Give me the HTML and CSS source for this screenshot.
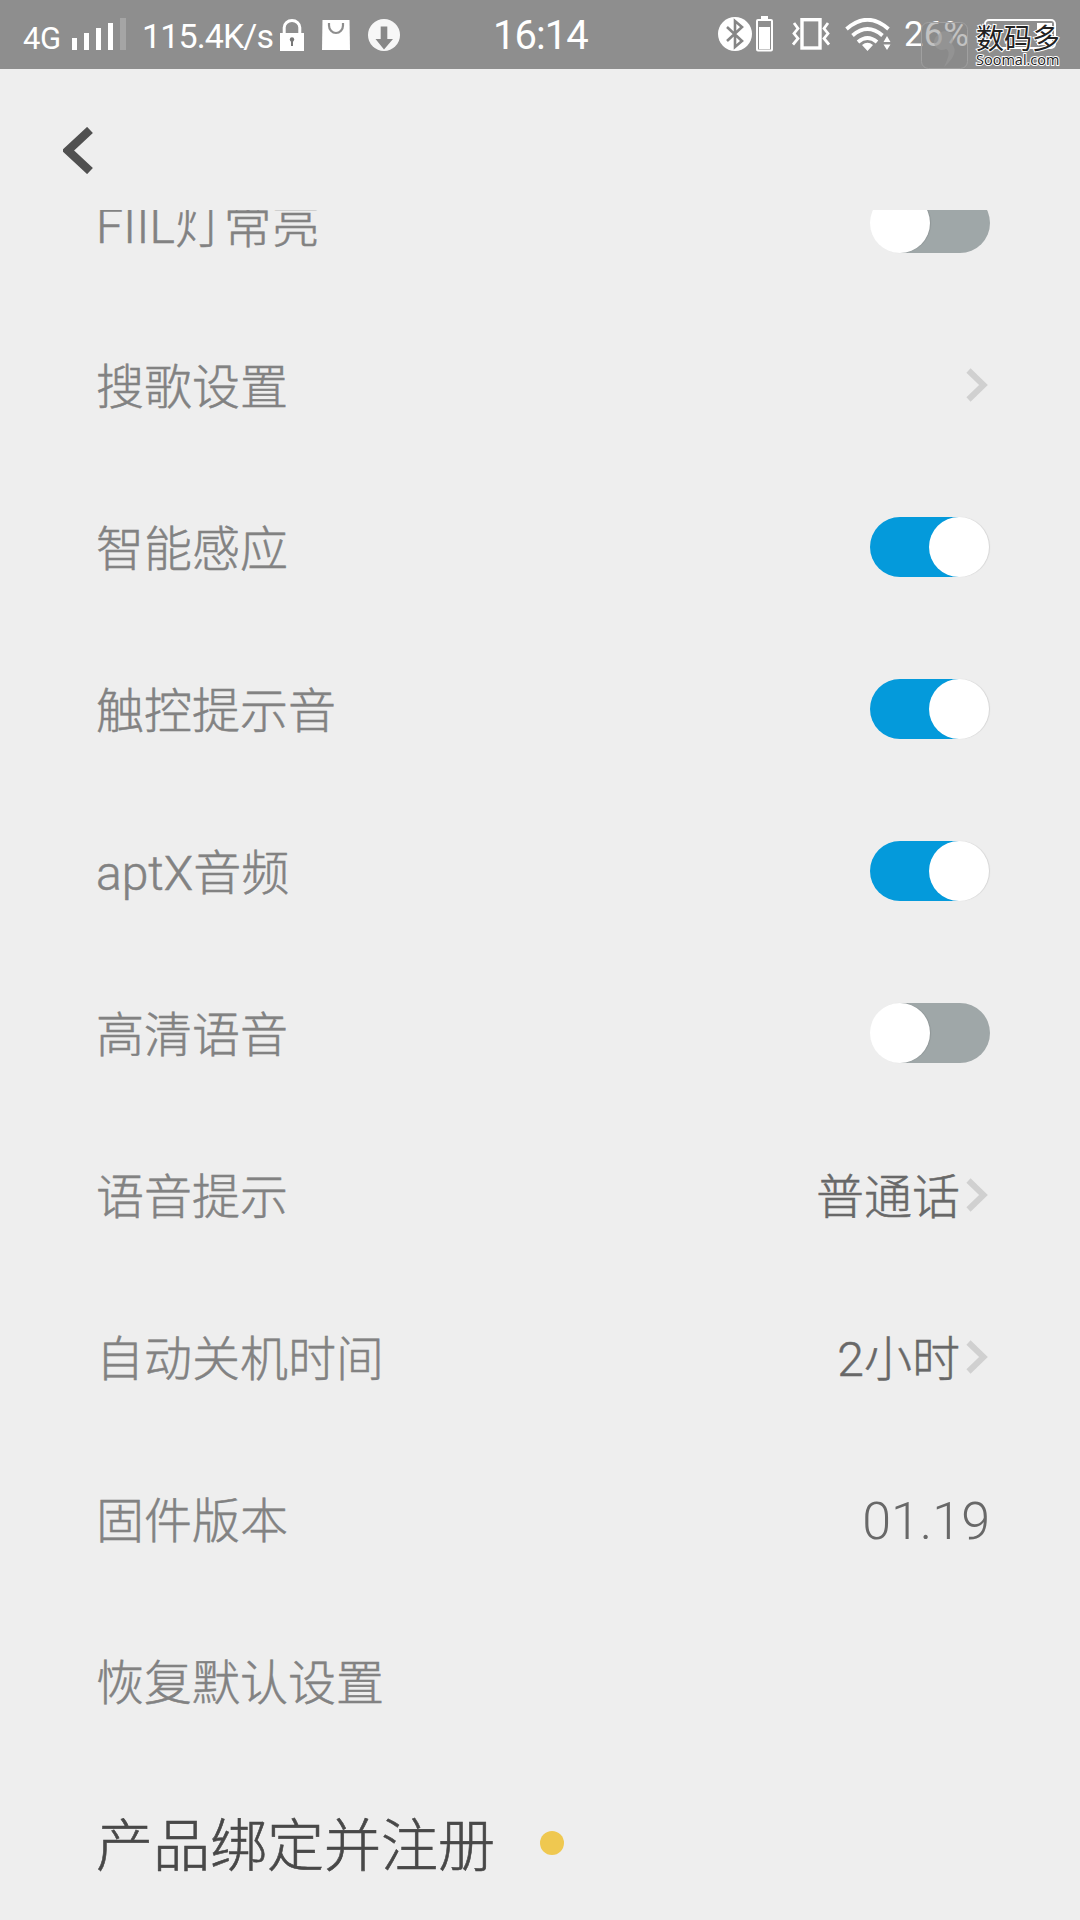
FILE: index.html
```html
<!DOCTYPE html>
<html lang="zh-CN">
<head>
<meta charset="utf-8">
<title>设置</title>
<link rel="stylesheet" href="styles.css">
</head>
<body>
<header class="status">
  <div class="status-group">
    <span class="net">4G</span>
    <svg class="signal" width="54" height="32" viewBox="0 0 54 32"><path fill="#fff" d="M0 20h5v12H0zM12 15h5v17h-5zM24 10h5v22h-5zM36 5h5v27h-5z"/><path fill="#a5a5a5" d="M48 0h6v32h-6z"/></svg>
    <span class="speed">115.4K/s</span>
    <svg class="lock" width="24" height="32" viewBox="0 0 24 32"><path d="M4.200 15V8.500a7.800 7 0 0 1 15.600 0V15" fill="none" stroke="#fff" stroke-width="3"/><path fill="#fff" d="M0 14h24v18H0z"/><circle cx="12" cy="20.500" r="2.200" fill="#777"/><path fill="#777" d="M11 21h2v6h-2z"/></svg>
    <svg class="bag" width="28" height="30" viewBox="0 0 28 30"><path fill="#fff" d="M.5 0h27l.5 30H0z"/><path d="M7 3v2.500a7 7.500 0 0 0 14 0V3" fill="none" stroke="#8e8e8e" stroke-width="2.200"/></svg>
    <svg class="down" width="32" height="32" viewBox="0 0 32 32"><circle cx="16" cy="16" r="16" fill="#f7f7f7"/><path fill="#888" d="M12.700 7.500h6.600V20h5.700L16 30.500 7.500 20h5.200z"/></svg>
  </div>
  <span class="clock">16:14</span>
  <div class="status-group status-right">
    <svg class="bt" width="34" height="34" viewBox="0 0 34 34"><circle cx="17" cy="17" r="17" fill="#fff"/><path d="M9 10l15 14-7 6V4l7 6L9 24" fill="none" stroke="#858585" stroke-width="2.600"/></svg>
    <svg class="btcell" width="17" height="36" viewBox="0 0 17 36"><path fill="#fff" d="M5 0h7v3H5z"/><rect x="1" y="4" width="15" height="30.500" rx="1" fill="none" stroke="#fff" stroke-width="2"/><path fill="#fff" d="M3 11h11v22H3z"/></svg>
    <svg class="vibrate" width="38" height="32" viewBox="0 0 38 32"><rect x="10" y="1.700" width="18" height="28.300" fill="none" stroke="#fff" stroke-width="3.400"/><path d="M2 5l4 5.500-4 5 4 5-5 6M36 5l-4 5.500 4 5-4 5 5 6" fill="none" stroke="#fff" stroke-width="2.800"/></svg>
    <svg class="wifi" width="46" height="33" viewBox="0 0 46 33"><path d="M1.500 11Q22.500-7.500 43.500 11M7.500 17.500Q22.500 4.500 37.500 17.500M13 24Q22.500 16 32 24" fill="none" stroke="#fff" stroke-width="3.800"/><path fill="#fff" d="M17 27q5.500-4.500 11 0l-5.500 6zM42 18l3.500 6h-7zM38.500 26.500h7L42 32z"/></svg>
    <span class="percent">26%</span>
    <svg class="battery" width="72" height="30" viewBox="0 0 72 30"><rect x="1" y="1" width="70" height="28" rx="4" fill="none" stroke="#fff" stroke-width="2"/><path fill="#fff" d="M53 4h15v22H53z"/></svg>
  </div>
</header>

<div class="watermark">
  <svg class="wm-logo" width="47" height="47" viewBox="0 0 47 47"><rect x=".5" y=".5" width="46" height="46" rx="7" fill="#858585" fill-opacity=".5" stroke="#a0a0a0"/><path d="M17 13a8 8 0 1 1 14 9q8 9-8 23 8-16 2-18a8 8 0 0 1-8-14z" fill="#999" fill-opacity=".6"/></svg>
  <div class="wm-text"><span class="wm-cn">数码多</span><span class="wm-en">Soomal.com</span></div>
</div>

<nav class="nav">
  <svg width="30" height="47" viewBox="0 0 30 47"><path d="M27 3L5 23.500 27 44" fill="none" stroke="#505050" stroke-width="8.500"/></svg>
</nav>

<main class="viewport">
  <ul class="list">
    <li class="row"><span class="label first">FIIL灯常亮</span><i class="toggle"></i></li>
    <li class="row"><span class="label">搜歌设置</span><svg class="chev" width="22" height="34" viewBox="0 0 22 34"><path d="M2.500 2.500L17.500 17 2.500 31.500"/></svg></li>
    <li class="row"><span class="label">智能感应</span><i class="toggle on"></i></li>
    <li class="row"><span class="label">触控提示音</span><i class="toggle on"></i></li>
    <li class="row"><span class="label">aptX音频</span><i class="toggle on"></i></li>
    <li class="row"><span class="label">高清语音</span><i class="toggle"></i></li>
    <li class="row"><span class="label">语音提示</span><span class="value">普通话</span><svg class="chev" width="22" height="34" viewBox="0 0 22 34"><path d="M2.500 2.500L17.500 17 2.500 31.500"/></svg></li>
    <li class="row"><span class="label">自动关机时间</span><span class="value">2小时</span><svg class="chev" width="22" height="34" viewBox="0 0 22 34"><path d="M2.500 2.500L17.500 17 2.500 31.500"/></svg></li>
    <li class="row"><span class="label">固件版本</span><span class="value version">01.19</span></li>
    <li class="row"><span class="label">恢复默认设置</span></li>
    <li class="row last"><span class="label strong">产品绑定并注册</span><i class="dot"></i></li>
  </ul>
</main>
</body>
</html>
```
FILE: styles.css
```css
* { box-sizing: border-box; }
body {
  margin: 0;
  width: 1080px;
  height: 1920px;
  overflow: hidden;
  display: flex;
  flex-direction: column;
  background: #eee;
  font-family: Roboto, "Noto Sans CJK SC", sans-serif;
  font-weight: 300;
}
svg { display: block; flex: none; }

.status {
  flex: none;
  height: 69px;
  display: grid;
  grid-template-columns: 493px 99px 1fr;
  background: #8e8e8e;
  color: #fff;
  font-weight: 400;
  line-height: 40px;
  white-space: nowrap;
}
.status-group { display: flex; align-items: flex-start; }
.net { font-size: 31px; margin: 19px 0 0 23px; width: 49px; letter-spacing: -.5px; }
.signal { margin-top: 18px; }
.speed { font-size: 34px; letter-spacing: -.9px; margin: 16px 0 0 16px; width: 138px; }
.lock { margin-top: 19px; }
.bag { margin: 20px 0 0 18px; }
.down { margin: 19px 0 0 18px; }
.clock { font-size: 40px; letter-spacing: -1px; margin-top: 16px; }
.status-right { padding-left: 126px; }
.bt { margin-top: 17px; }
.btcell { margin: 16px 0 0 4px; }
.vibrate { margin: 18px 0 0 19px; }
.wifi { margin: 18px 0 0 15px; }
.percent { font-size: 35px; margin: 15px 0 0 13px; width: 80px; }
.battery { margin: 19px 0 0 0; }

.watermark {
  position: absolute;
  left: 921px;
  top: 22px;
  display: flex;
  gap: 8px;
}
.wm-text { display: flex; flex-direction: column; }
.wm-cn, .wm-en {
  color: #222;
  -webkit-text-stroke: 2px #fff;
  paint-order: stroke fill;
  white-space: nowrap;
}
.wm-cn { font: 400 28px/30px "Noto Sans CJK SC", sans-serif; }
.wm-en { font: 400 14.500px/16px "Open Sans", sans-serif; }

.nav { flex: none; height: 141px; padding: 58px 0 0 63px; }

.viewport { flex: 1; overflow: hidden; }
.list { list-style: none; margin: -68px 0 0; padding: 0 90px 0 96px; }
.row { height: 162px; display: flex; align-items: center; }
.label {
  font-size: 48px;
  line-height: 60px;
  padding-top: 5px;
  color: #828282;
  -webkit-text-stroke: .5px #828282;
  margin-right: auto;
  white-space: nowrap;
}
.first { padding-top: 8px; letter-spacing: .3px; }
.value {
  font-size: 48px;
  line-height: 60px;
  padding-top: 5px;
  color: #686868;
  -webkit-text-stroke: .5px #686868;
}
.version { font-size: 52px; -webkit-text-stroke: 0; }
.last { justify-content: flex-start; }
.strong {
  font-size: 57px;
  padding-top: 7px;
  color: #484848;
  -webkit-text-stroke: .6px #484848;
  margin-right: 45px;
}
.chev { margin: 0 2px 0 6px; }
.chev path { fill: none; stroke: #d0d0d0; stroke-width: 6; }

.toggle {
  width: 120px;
  height: 60px;
  border-radius: 30px;
  background: linear-gradient(to left, #9fa7a8 75%, transparent 75%);
  display: flex;
}
.toggle::before {
  content: "";
  width: 60px;
  height: 60px;
  border-radius: 50%;
  background: #fff;
  box-shadow: 1px 0 1px rgba(0, 0, 0, .1);
}
.toggle.on {
  width: 119px;
  margin-right: 1px;
  background: linear-gradient(to right, #049adb 75%, transparent 75%);
  justify-content: flex-end;
}
.dot { width: 24px; height: 24px; border-radius: 50%; background: #efc850; }
```
